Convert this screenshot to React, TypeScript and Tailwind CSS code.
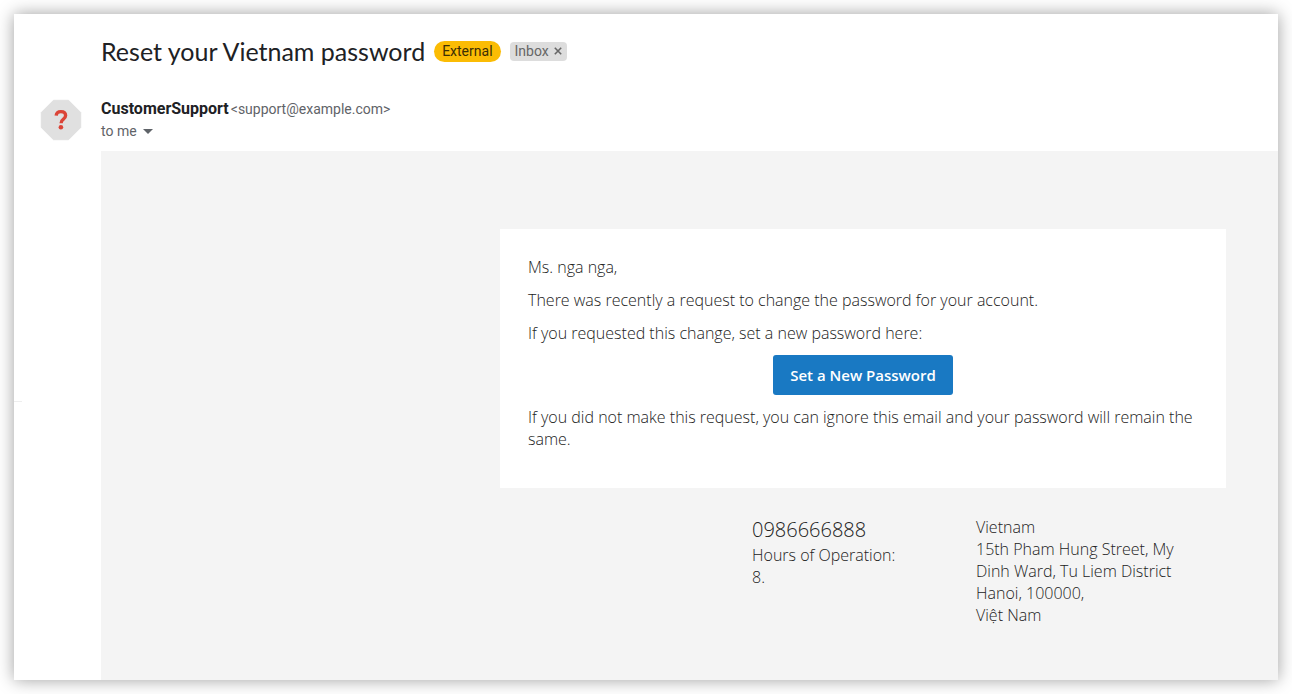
function SenderAvatar() {
  return (
    <svg viewBox="0 0 42 42" className="size-[42px] shrink-0" role="img" aria-label="Unverified sender">
      <path
        d="M13.5 1.3h15L40.7 13.5v15L28.5 40.7h-15L1.3 28.5v-15Z"
        fill="#e0e0e0"
        stroke="#e0e0e0"
        strokeWidth="1"
        strokeLinejoin="round"
      />
      <path
        d="M16.2 16.6c.2-2.6 2-4 4.7-4 2.8 0 4.7 1.5 4.7 3.9 0 1.8-1 2.8-2.4 3.8-1.6 1.1-2.1 1.9-2.1 3.9"
        fill="none"
        stroke="#db4437"
        strokeWidth="3.4"
      />
      <circle cx="20.9" cy="28.3" r="2.3" fill="#db4437" />
    </svg>
  );
}

function SubjectRow() {
  return (
    <div className="flex flex-wrap items-center pt-[19px]">
      <h1 className="mr-[9px] font-['Lato',sans-serif] text-[25px] leading-9 text-[#202124]">
        Reset your Vietnam password
      </h1>
      <span className="mr-[9px] rounded-full bg-[#fbbc04] px-2 text-[14px] leading-[21px] text-[#3c2f05]">
        External
      </span>
      <span className="flex items-center gap-[5px] rounded bg-[#ddd] px-[5px] text-[14px] leading-[19px] text-[#666]">
        Inbox
        <button type="button" aria-label="Remove label Inbox">
          <svg viewBox="0 0 8 8" className="size-2" aria-hidden="true">
            <path d="M.8.8l6.4 6.4M7.2.8L.8 7.2" stroke="#666" strokeWidth="1.6" />
          </svg>
        </button>
      </span>
    </div>
  );
}

function Sender() {
  return (
    <div className="flex flex-col">
      <div className="flex flex-wrap items-baseline gap-[2px] leading-[22px]">
        <span className="text-[16px] font-bold text-[#202124]">CustomerSupport</span>
        <span className="text-[14px] text-[#5f6368]">&lt;support@example.com&gt;</span>
      </div>
      <button
        type="button"
        aria-label="Show details"
        className="flex items-center gap-[6px] self-start text-[14px] leading-[22px] text-[#5f6368]"
      >
        to me
        <svg viewBox="0 0 10 5" className="h-[5px] w-[10px]" aria-hidden="true">
          <path d="M0 0h10L5 5Z" fill="#5f6368" />
        </svg>
      </button>
    </div>
  );
}

function Message() {
  return (
    <div className="flex grow flex-col items-end bg-[#f4f4f4] pt-[78px] pr-[52px] font-['Open_Sans',sans-serif] text-[16px] leading-[22px] font-light text-[#222]">
      <section className="flex w-full max-w-[726px] flex-col gap-[11px] bg-white px-7 pt-[27px] pb-[38px]">
        <p>Ms. nga nga,</p>
        <p>There was recently a request to change the password for your account.</p>
        <p>If you requested this change, set a new password here:</p>
        <a
          href="#reset"
          className="self-center rounded-[3px] bg-[#1979c3] px-[17px] py-[9px] text-[15px] font-semibold text-white"
        >
          Set a New Password
        </a>
        <p>If you did not make this request, you can ignore this email and your password will remain the same.</p>
      </section>
      <footer className="flex w-full max-w-[474px] gap-[74px] pt-[28px] pb-12">
        <div className="w-[150px]">
          <p className="text-[20px] leading-7">0986666888</p>
          <p>Hours of Operation:</p>
          <p>8.</p>
        </div>
        <address className="w-[206px] not-italic">
          Vietnam
          <br />
          15th Pham Hung Street, My Dinh Ward, Tu Liem District
          <br />
          Hanoi, 100000,
          <br />
          Việt Nam
        </address>
      </footer>
    </div>
  );
}

export default function App() {
  return (
    <div className="flex min-h-screen bg-white p-[14px] font-['Roboto',sans-serif]">
      <main className="flex grow bg-white shadow-[0_0_16px_rgba(0,0,0,0.38)]">
        <div className="flex w-[87px] shrink-0 flex-col pt-[85px]">
          <div className="pl-[26px]">
            <SenderAvatar />
          </div>
          <hr className="mt-[260px] w-2 border-[#eee]" />
        </div>
        <article className="flex min-w-0 grow flex-col">
          <SubjectRow />
          <div className="pt-[29px] pb-[9px]">
            <Sender />
          </div>
          <Message />
        </article>
      </main>
    </div>
  );
}
